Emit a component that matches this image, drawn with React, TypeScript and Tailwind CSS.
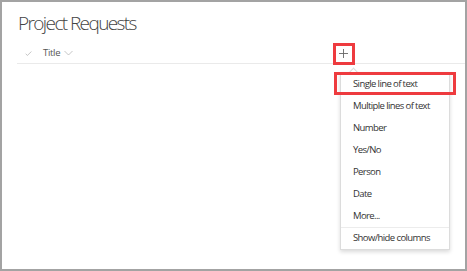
import React from 'react';

const menuItems = [
  'Single line of text',
  'Multiple lines of text',
  'Number',
  'Yes/No',
  'Person',
  'Date',
  'More...',
];

export default function App() {
  return (
    <div
      className="relative w-[467px] h-[271px] bg-white border-2 border-[#a3a3a3] overflow-hidden"
      style={{ fontFamily: '"Open Sans", "Noto Sans", sans-serif' }}
    >
      {/* タイトル */}
      <div className="pl-[16px] pt-[9px] h-[36px]">
        <h1 className="text-[19px] leading-[24px] font-light text-[#444] tracking-[-1.6px]">
          Project Requests
        </h1>
      </div>

      {/* 列ヘッダー */}
      <div className="ml-[15px] h-[26px] pt-[5px] flex items-center border-b border-[#eaeaea]">
        <div className="w-[24px] pl-[8px] flex items-center">
          <svg className="w-[7px] h-[7px]" viewBox="0 0 16 16" fill="none" stroke="#a0a0a0" strokeWidth="1.4">
            <path d="M1.5 8.5 L5.5 12.5 L14.5 3.5" />
          </svg>
        </div>
        <div className="w-[296px] pl-[2px] flex items-center gap-[4px]">
          <span className="text-[9.5px] text-[#555] tracking-[-0.3px]">Title</span>
          <svg className="w-[9px] h-[6px]" viewBox="0 0 18 10" fill="none" stroke="#a8a8a8" strokeWidth="1.3">
            <path d="M1 1 L9 9 L17 1" />
          </svg>
        </div>
        <div className="w-[12px] h-[12px] flex items-center justify-center">
          <svg className="w-[9px] h-[9px]" viewBox="0 0 10 10" fill="none" stroke="#666" strokeWidth="1">
            <path d="M5 0 V10 M0 5 H10" />
          </svg>
        </div>
      </div>

      {/* 追加メニュー */}
      <div className="absolute left-[338px] top-[70px] w-[110px] bg-white border border-[#dcdcdc] shadow-[0_2px_4px_rgba(0,0,0,0.15)]">
        <div className="absolute -top-[4px] left-[9px] w-[7px] h-[7px] rotate-45 bg-white border-l border-t border-[#dcdcdc]" />
        {menuItems.map((item) => (
          <div
            key={item}
            className="h-[22px] flex items-center pl-[12px] text-[9.5px] text-[#333] tracking-[-0.6px]"
          >
            {item}
          </div>
        ))}
        <div className="h-px bg-[#ececec]" />
        <div className="h-[21px] flex items-center pl-[12px] text-[9.5px] text-[#333] tracking-[-0.6px]">
          Show/hide columns
        </div>
      </div>

      {/* 赤枠の注釈 */}
      <div className="absolute left-[331px] top-[41px] w-[22px] h-[22px] border-[3px] border-[#ee3b3f]" />
      <div className="absolute left-[332px] top-[70px] w-[122px] h-[23px] border-[3px] border-[#ee3b3f]" />
    </div>
  );
}
